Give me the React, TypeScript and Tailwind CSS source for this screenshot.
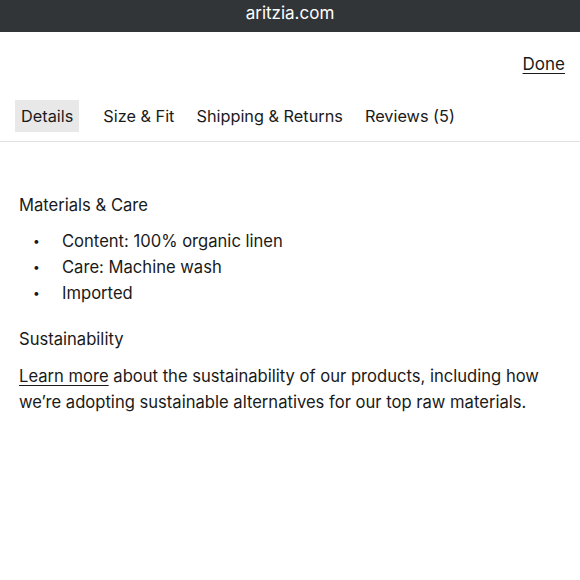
export default function App() {
  return (
    <div className="w-[580px] h-[580px] bg-white text-[#1a1a1a] overflow-hidden" style={{ fontFamily: "Inter, 'Noto Sans', sans-serif" }}>
      {/* Browser url bar */}
      <div className="h-[32px] bg-[#323538] flex items-center justify-center">
        <span className="text-white text-[17px] leading-none -mt-[6px]">aritzia.com</span>
      </div>

      {/* Done */}
      <div className="flex justify-end pr-[15px] pt-[21px]">
        <button className="text-[17px] underline underline-offset-[3px] leading-[22px]">Done</button>
      </div>

      {/* Tabs */}
      <div className="mt-[25px] border-b border-[#e2e2e2] pb-[9px] pl-[15px] flex items-center gap-[22px] text-[16.3px]">
        <span className="bg-[#e8e8e8] h-[32px] px-[6px] mr-[2px] flex items-center">Details</span>
        <span>Size &amp; Fit</span>
        <span>Shipping &amp; Returns</span>
        <span>Reviews (5)</span>
      </div>

      {/* Content */}
      <div className="px-[19px] pt-[50px] text-[16.6px]">
        <h3 className="leading-[26px]">Materials &amp; Care</h3>
        <ul className="mt-[10px] leading-[26px]">
          <li className="flex"><span className="w-[43px] pl-[14px] text-[12px]">•</span>Content: 100% organic linen</li>
          <li className="flex"><span className="w-[43px] pl-[14px] text-[12px]">•</span>Care: Machine wash</li>
          <li className="flex"><span className="w-[43px] pl-[14px] text-[12px]">•</span>Imported</li>
        </ul>
        <h3 className="mt-[20px] leading-[26px]">Sustainability</h3>
        <p className="mt-[11px] leading-[26px]">
          <a className="underline underline-offset-[3px]">Learn more</a> about the sustainability of our products, including how we’re adopting sustainable alternatives for our top raw materials.
        </p>
      </div>
    </div>
  );
}
